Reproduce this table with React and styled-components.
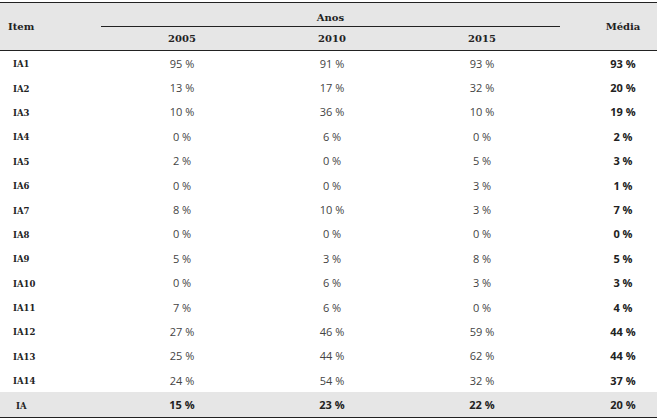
import React from 'react';
import styled, { createGlobalStyle } from 'styled-components';

const GlobalStyle = createGlobalStyle`
  html, body {
    margin: 0;
    padding: 0;
    background: #ffffff;
  }
  body {
    font-family: "Open Sans", "Noto Sans", sans-serif;
  }
`;

const Table = styled.div`
  margin-top: 2px;
  width: 657px;
  border-top: 1px solid #222;
  border-bottom: 1px solid #222;
`;

const Grid = styled.div`
  display: grid;
  grid-template-columns: 107px 150px 150px 150px 100px;
`;

const Header = styled(Grid)`
  background: #e6e6e6;
  height: 47px;
  border-bottom: 1.5px solid #222;
  grid-template-rows: 24px 23px;
`;

const HeadCell = styled.div`
  font-family: "DejaVu Serif", serif;
  font-weight: bold;
  font-size: 10px;
  color: #222;
  display: flex;
  align-items: center;
  justify-content: center;
  grid-row: ${(p) => p.$row || 'auto'};
  grid-column: ${(p) => p.$col || 'auto'};
`;

const ItemHead = styled(HeadCell)`
  grid-row: 1 / span 2;
  grid-column: 1;
  padding-left: 8px;
  justify-content: flex-start;
`;

const AnosHead = styled(HeadCell)`
  grid-row: 1;
  grid-column: 2 / span 3;
  margin: 0 -3px 0 -6px;
  border-bottom: 1px solid #222;
  padding-top: 5px;
`;

const MediaHead = styled(HeadCell)`
  grid-row: 1 / span 2;
  grid-column: 5;
  padding-left: 32px;
`;

const Row = styled(Grid)`
  height: 24.4px;
  background: ${(p) => (p.$total ? '#e6e6e6' : 'transparent')};
`;

const Label = styled.div`
  font-family: "DejaVu Serif", serif;
  font-weight: bold;
  font-size: 8.5px;
  color: #222;
  display: flex;
  align-items: center;
  padding-top: 2px;
  padding-left: ${(p) => (p.$total ? 16 : 13)}px;
`;

const Value = styled.div`
  font-size: 11px;
  color: ${(p) => (p.$bold ? '#222' : '#444')};
  font-weight: ${(p) => (p.$bold ? 700 : 400)};
  display: flex;
  align-items: center;
  justify-content: center;
  padding-left: ${(p) => p.$pad || 0}px;
`;

const rows = [
  ['IA1', 95, 91, 93, 93],
  ['IA2', 13, 17, 32, 20],
  ['IA3', 10, 36, 10, 19],
  ['IA4', 0, 6, 0, 2],
  ['IA5', 2, 0, 5, 3],
  ['IA6', 0, 0, 3, 1],
  ['IA7', 8, 10, 3, 7],
  ['IA8', 0, 0, 0, 0],
  ['IA9', 5, 3, 8, 5],
  ['IA10', 0, 6, 3, 3],
  ['IA11', 7, 6, 0, 4],
  ['IA12', 27, 46, 59, 44],
  ['IA13', 25, 44, 62, 44],
  ['IA14', 24, 54, 32, 37],
];

const total = ['IA', 15, 23, 22, 20];

export default function App() {
  return (
    <>
      <GlobalStyle />
      <Table>
        <Header>
          <ItemHead>Item</ItemHead>
          <AnosHead>Anos</AnosHead>
          <MediaHead>Média</MediaHead>
          <HeadCell $row={2} $col={2}>2005</HeadCell>
          <HeadCell $row={2} $col={3}>2010</HeadCell>
          <HeadCell $row={2} $col={4}>2015</HeadCell>
        </Header>
        {rows.map(([label, a, b, c, m]) => (
          <Row key={label}>
            <Label>{label}</Label>
            <Value>{a} %</Value>
            <Value>{b} %</Value>
            <Value>{c} %</Value>
            <Value $bold $pad={32}>{m} %</Value>
          </Row>
        ))}
        <Row $total>
          <Label $total>{total[0]}</Label>
          <Value $bold>{total[1]} %</Value>
          <Value $bold>{total[2]} %</Value>
          <Value $bold>{total[3]} %</Value>
          <Value $bold $pad={32}>{total[4]} %</Value>
        </Row>
      </Table>
    </>
  );
}
